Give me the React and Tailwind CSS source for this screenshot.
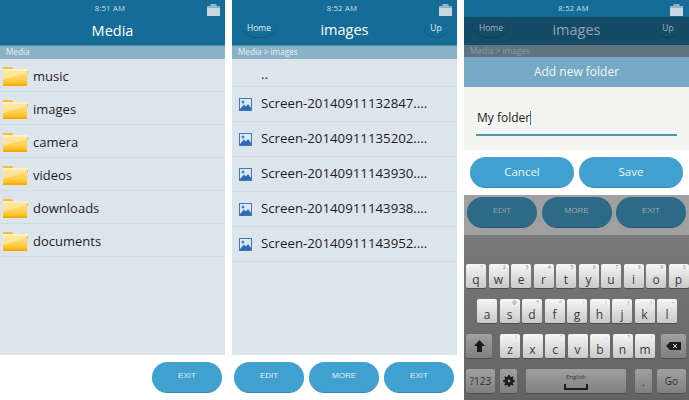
const folders = ["music", "images", "camera", "videos", "downloads", "documents"];
const files = [
  "Screen-20140911132847....",
  "Screen-20140911135202....",
  "Screen-20140911143930....",
  "Screen-20140911143938....",
  "Screen-20140911143952....",
];

const row1 = [["q", "1"], ["w", "2"], ["e", "3"], ["r", "4"], ["t", "5"], ["y", "6"], ["u", "7"], ["i", "8"], ["o", "9"], ["p", "0"]];
const row2 = [["a", "-"], ["s", "@"], ["d", "*"], ["f", "^"], ["g", ":"], ["h", ";"], ["j", "("], ["k", ")"], ["l", "~"]];
const row3 = [["z", "/"], ["x", "'"], ["c", "\""], ["v", "."], ["b", ","], ["n", "?"], ["m", "!"]];

function FolderIcon() {
  return (
    <svg width="25" height="20" viewBox="0 0 25 20" className="shrink-0">
      <defs>
        <linearGradient id="folderFront" x1="0" y1="0" x2="0" y2="1">
          <stop offset="0" stopColor="#ffe08a" />
          <stop offset="0.6" stopColor="#ffcf4a" />
          <stop offset="1" stopColor="#fbb200" />
        </linearGradient>
      </defs>
      <path d="M0 1.5 L0 8 L25 8 L25 4 L11 4 L9 1 L1 1 Z" fill="#f6bd3a" />
      <rect x="0" y="3" width="25" height="2" fill="#fff0c4" />
      <rect x="0" y="5" width="24" height="15" fill="url(#folderFront)" />
      <path d="M0 5 L24 5 L24 7 L0 14 Z" fill="#ffeaa8" opacity="0.7" />
      <rect x="0" y="18.5" width="24" height="1.5" fill="#f5a800" />
    </svg>
  );
}

function ImageIcon() {
  return (
    <svg width="13" height="13" viewBox="0 0 13 13" className="shrink-0">
      <rect x="0.5" y="0.5" width="12" height="12" fill="#dbe8f5" stroke="#3f78bd" />
      <circle cx="4" cy="4" r="1.5" fill="#4a82c4" />
      <path d="M1 11 L5 6.5 L7 8.5 L9 6 L12 10 L12 12 L1 12 Z" fill="#2f6bb3" />
    </svg>
  );
}

function BatteryIcon() {
  return (
    <svg width="13" height="13" viewBox="0 0 13 13">
      <path d="M3.5 1 L9.5 1 L9.5 3 L13 3 L13 13 L0 13 L0 3 L3.5 3 Z" fill="#8fb4c8" />
      <rect x="0" y="5" width="13" height="8" fill="#c9d8e0" />
    </svg>
  );
}

function PillButton({ label, dim }) {
  return (
    <div
      className={
        dim
          ? "flex h-[31px] w-[70px] items-center justify-center rounded-[16px] border-b border-[#275a72] bg-[#2d6a87] pb-[2px] font-['Liberation_Sans',sans-serif] text-[8px] text-[#9aa5ab]"
          : "flex h-[31px] w-[70px] items-center justify-center rounded-[16px] border-b border-[#3489b5] bg-[#40a0cf] pb-[2px] font-['Liberation_Sans',sans-serif] text-[8px] text-[#e3f1f8]"
      }
    >
      {label}
    </div>
  );
}

function StatusBar({ time, right }) {
  return (
    <div className={`flex h-[17px] items-center justify-between bg-[#146c97] pt-[1px] ${right}`}>
      <span className="w-[13px]" />
      <span className="text-[7.5px] tracking-[0.3px] text-[#cfe0e8]">{time}</span>
      <BatteryIcon />
    </div>
  );
}

function NavHeader({ title, dark }) {
  const edge = dark ? "border-[#0f3c52]" : "border-[#0f5a80]";
  return (
    <div className={dark ? "flex h-[28px] justify-between bg-[#144b66] px-[8px] text-[#9eb2bd]" : "flex h-[28px] justify-between bg-[#146c97] px-[8px] text-[#e4eff5]"}>
      <div className="flex w-[60px] justify-start">
        <span className={`h-[21px] w-[38px] rounded-b-[16px] border-b ${edge} text-center text-[8.5px] leading-[22px]`}>Home</span>
      </div>
      <span className={dark ? "text-[14.5px] leading-[26px] text-[#90a5b0]" : "text-[14.5px] leading-[26px] text-white"}>{title}</span>
      <div className="flex w-[60px] justify-end">
        <span className={`h-[21px] w-[26px] rounded-b-[14px] border-b ${edge} text-center text-[8.5px] leading-[22px]`}>Up</span>
      </div>
    </div>
  );
}

function Breadcrumb({ text }) {
  return (
    <div className="flex h-[14px] items-center border-t border-[#4f8cab] bg-[#8ab2c6] px-[6px] text-[8.2px] text-[#e6eff4]">
      {text}
    </div>
  );
}

function Key({ letter, hint }) {
  return (
    <div className="relative flex h-[25px] w-[20px] items-end justify-center rounded-[2px] border-b border-[#4d4d4d] bg-gradient-to-b from-[#f7f7f7] to-[#c9c9c9] pb-[1px] text-[12px] leading-[15px] text-[#3a3a3a]">
      <span className="absolute top-[1px] right-[3px] text-[4.5px] leading-[5px] text-[#777777]">{hint}</span>
      {letter}
    </div>
  );
}

function DarkKey({ width, children }) {
  return (
    <div className={`flex h-[25px] ${width} items-center justify-center rounded-[2px] border-b border-[#4d4d4d] bg-gradient-to-b from-[#a0a0a0] to-[#808080] text-[#333333]`}>
      {children}
    </div>
  );
}

function Keyboard() {
  return (
    <div className="flex h-[165px] flex-col bg-gradient-to-b from-[#7a7a7a] to-[#636363]">
      <div className="h-[29px]" />
      <div className="flex gap-[2.5px] pl-[2px]">
        {row1.map(([letter, hint]) => (
          <Key key={letter} letter={letter} hint={hint} />
        ))}
      </div>
      <div className="mt-[10px] flex gap-[2.5px] pl-[13px]">
        {row2.map(([letter, hint]) => (
          <Key key={letter} letter={letter} hint={hint} />
        ))}
      </div>
      <div className="mt-[10px] flex pl-[2px]">
        <DarkKey width="w-[26px]">
          <svg width="11" height="12" viewBox="0 0 11 12">
            <path d="M5.5 0 L11 6 L8 6 L8 12 L3 12 L3 6 L0 6 Z" fill="#1c1c1c" />
          </svg>
        </DarkKey>
        <div className="ml-[8px] flex gap-[2.5px]">
          {row3.map(([letter, hint]) => (
            <Key key={letter} letter={letter} hint={hint} />
          ))}
        </div>
        <div className="ml-auto mr-[3px]">
          <DarkKey width="w-[25px]">
            <svg width="15" height="8" viewBox="0 0 15 8">
              <path d="M0 4 L4 0 L15 0 L15 8 L4 8 Z" fill="#1c1c1c" />
              <path d="M7 2 L11 6 M11 2 L7 6" stroke="#dddddd" strokeWidth="1" />
            </svg>
          </DarkKey>
        </div>
      </div>
      <div className="mt-[10px] flex pl-[2px]">
        <DarkKey width="w-[29px]">
          <span className="text-[10px]">?123</span>
        </DarkKey>
        <div className="ml-[5px]">
          <DarkKey width="w-[17px]">
            <svg width="12" height="12" viewBox="0 0 12 12">
              <circle cx="6" cy="6" r="3.5" fill="none" stroke="#1c1c1c" strokeWidth="2.4" />
              <path d="M6 0 V12 M0 6 H12 M1.8 1.8 L10.2 10.2 M10.2 1.8 L1.8 10.2" stroke="#1c1c1c" strokeWidth="1.6" />
              <circle cx="6" cy="6" r="1.4" fill="#8f8f8f" />
            </svg>
          </DarkKey>
        </div>
        <div className="ml-[9px]">
          <DarkKey width="w-[100px]">
            <div className="flex flex-col items-center">
              <span className="text-[6px] leading-[10px] text-[#333333]">English</span>
              <span className="mt-[2px] h-[6px] w-[24px] border-x-2 border-b-2 border-[#1c1c1c]" />
            </div>
          </DarkKey>
        </div>
        <div className="ml-[9px]">
          <DarkKey width="w-[17px]">
            <span className="text-[11px] leading-[11px]">.</span>
          </DarkKey>
        </div>
        <div className="ml-[5px]">
          <DarkKey width="w-[29px]">
            <span className="text-[10px]">Go</span>
          </DarkKey>
        </div>
      </div>
    </div>
  );
}

export default function App() {
  return (
    <div className="flex h-[400px] w-[689px] gap-[7px] overflow-hidden bg-white font-['Open_Sans',sans-serif]">
      {/* folder list */}
      <div className="flex w-[225px] flex-col">
        <StatusBar time="8:51 AM" right="pr-[5px]" />
        <div className="flex h-[28px] items-start justify-center bg-[#146c97] pt-[1px] text-[14.5px] leading-[26px] text-white">Media</div>
        <Breadcrumb text="Media" />
        <div className="h-[296px] bg-[#dde5ec]">
          {folders.map((name) => (
            <div key={name} className="flex h-[33px] items-center gap-[5px] border-b border-[#d2dadf] pt-[1px] pl-[3px] text-[13px] text-[#1d1d1d]">
              <FolderIcon />
              <span className="pt-[2px]">{name}</span>
            </div>
          ))}
        </div>
        <div className="flex flex-1 items-start justify-end pt-[7px] pr-[3px]">
          <PillButton label="EXIT" />
        </div>
      </div>

      {/* image list */}
      <div className="flex w-[225px] flex-col">
        <StatusBar time="8:52 AM" right="pr-[5px]" />
        <NavHeader title="images" />
        <Breadcrumb text="Media > images" />
        <div className="h-[296px] bg-[#dde5ec]">
          <div className="flex h-[28px] items-center border-b border-[#d2dadf] pt-[5px] pl-[29px] text-[13.25px] text-[#1d1d1d]">..</div>
          {files.map((name) => (
            <div key={name} className="flex h-[35px] items-center gap-[9px] border-b border-[#d2dadf] pl-[7px] text-[13.25px] text-[#1d1d1d]">
              <ImageIcon />
              {name}
            </div>
          ))}
        </div>
        <div className="flex flex-1 items-start justify-between pt-[7px] pr-[3px] pl-[2px]">
          <PillButton label="EDIT" />
          <PillButton label="MORE" />
          <PillButton label="EXIT" />
        </div>
      </div>

      {/* add folder dialog over keyboard */}
      <div className="relative flex w-[225px] flex-col">
        <StatusBar time="8:52 AM" right="pr-[6px]" />
        <NavHeader title="images" dark />
        <div className="flex h-[12px] items-center bg-[#5f747f] px-[6px] text-[8.2px] text-[#8b9aa3]">Media &gt; images</div>
        <div className="flex h-[30px] items-center justify-center bg-[#75a9c4] text-[12px] text-[#f0f6f9]">Add new folder</div>
        <div className="h-[63px] bg-[#f4f4f0] px-[12px] pt-[19px]">
          <div className="flex h-[30px] items-start border-b-2 border-[#4f93b5] pl-[1px] text-[12px] leading-[24px] text-[#1d1d1d]">
            My folder
            <span className="mt-[5px] h-[14px] w-px bg-[#3f78bd]" />
          </div>
        </div>
        <div className="flex h-[45px] items-start justify-between bg-white px-[6px] pt-[7px]">
          <div className="flex h-[31px] w-[104px] items-center justify-center rounded-[16px] border-b border-[#3489b5] bg-[#40a0cf] text-[11.5px] text-[#eef6fa]">Cancel</div>
          <div className="flex h-[31px] w-[104px] items-center justify-center rounded-[16px] border-b border-[#3489b5] bg-[#40a0cf] text-[11.5px] text-[#eef6fa]">Save</div>
        </div>
        <div className="flex h-[40px] items-start justify-between bg-[#a0a0a0] px-[3px] pt-[2px]">
          <PillButton label="EDIT" dim />
          <PillButton label="MORE" dim />
          <PillButton label="EXIT" dim />
        </div>
        <Keyboard />
      </div>
    </div>
  );
}
